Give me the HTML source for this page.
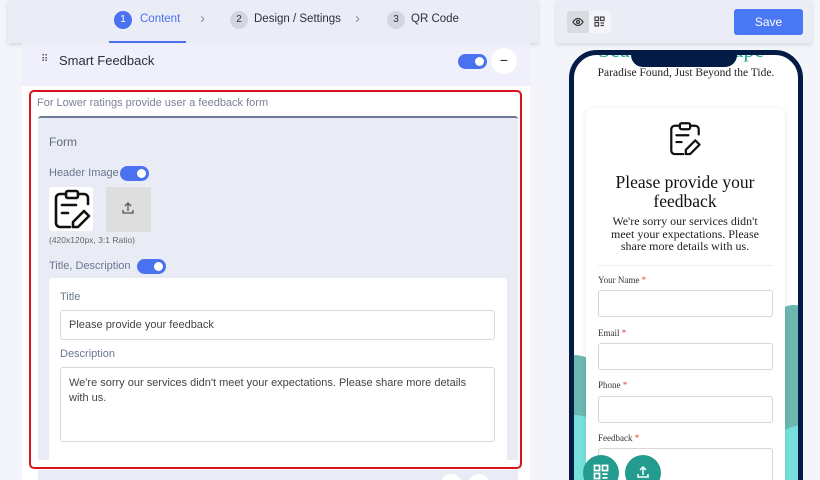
<!DOCTYPE html>
<html style="width:820px;height:480px;overflow:hidden"><head><meta charset="utf-8"><style>
*{box-sizing:border-box;margin:0;padding:0}
body{width:820px;height:480px;overflow:hidden;background:#f3f5fa;font-family:"Liberation Sans",sans-serif;position:relative}
.abs{position:absolute}
.tog{position:absolute;width:29px;height:15px;border-radius:8px;background:#4a72f0}
.tog:after{content:"";position:absolute;right:3px;top:3px;width:9px;height:9px;border-radius:50%;background:#fff}
.lbl{color:#6b7690;font-size:11px}
.inp{position:absolute;background:#fff;border:1px solid #d5d8df;border-radius:3px}
.pl{position:absolute;left:598px;font-family:"Liberation Serif",serif;font-size:9px;color:#333}
.pl b{color:#e53935;font-weight:normal}
.pi{position:absolute;left:598px;width:175px;height:27px;border:1px solid #d6d6d6;border-radius:3px;background:#fff}
</style></head><body>
<div class="abs" style="left:0;top:0;width:820px;height:480px;overflow:hidden">
<!-- left -->
<div class="abs" style="left:22px;top:40px;width:508px;height:440px;background:#fff"></div>
<div class="abs" style="left:8px;top:0;width:530px;height:43px;background:#eaedf6;box-shadow:0 2px 4px rgba(0,0,0,.12)"></div>
<div class="abs" style="left:114px;top:11px;width:18px;height:18px;border-radius:50%;background:#4a72f0;color:#fff;font-size:10px;text-align:center;line-height:18px">1</div>
<div class="abs" style="left:140px;top:13px;font-size:11.5px;color:#4a72f0">Content</div>
<div class="abs" style="left:109px;top:41px;width:77px;height:2px;background:#4a72f0"></div>
<div class="abs" style="left:200px;top:10px;font-size:15px;color:#8a90a0">›</div>
<div class="abs" style="left:230px;top:11px;width:18px;height:18px;border-radius:50%;background:#d2d6e0;color:#333;font-size:10px;text-align:center;line-height:18px">2</div>
<div class="abs" style="left:254px;top:13px;font-size:11.5px;color:#2b3040">Design / Settings</div>
<div class="abs" style="left:355px;top:10px;font-size:15px;color:#8a90a0">›</div>
<div class="abs" style="left:387px;top:11px;width:18px;height:18px;border-radius:50%;background:#d2d6e0;color:#333;font-size:10px;text-align:center;line-height:18px">3</div>
<div class="abs" style="left:411px;top:13px;font-size:11.5px;color:#2b3040">QR Code</div>

<div class="abs" style="left:22px;top:43px;width:508px;height:43px;background:#eff0fb"></div>
<div class="abs" style="left:41px;top:54px;font-size:10px;color:#555">⠿</div>
<div class="abs" style="left:59px;top:53px;font-size:13px;color:#2b3040">Smart Feedback</div>
<div class="tog" style="left:458px;top:54px"></div>
<div class="abs" style="left:491px;top:48px;width:26px;height:26px;border-radius:50%;background:#fff;text-align:center;line-height:24px;font-size:14px;color:#222">−</div>

<div class="abs" style="left:38px;top:470px;width:480px;height:10px;background:#e9ecf5"></div>
<div class="abs" style="left:440px;top:474px;width:22px;height:22px;border-radius:50%;background:#fff"></div>
<div class="abs" style="left:468px;top:474px;width:22px;height:22px;border-radius:50%;background:#fff"></div>

<div class="abs" style="left:29px;top:90px;width:493px;height:379px;border:2px solid #d9141d;border-radius:5px;background:#fff"></div>
<div class="abs lbl" style="left:37px;top:97px;font-size:11px;color:#7a8298">For Lower ratings provide user a feedback form</div>
<div class="abs" style="left:38px;top:116px;width:480px;height:344px;background:#e9ecf5;border-top:2px solid #6f7a94;border-radius:3px 3px 0 0"></div>
<div class="abs" style="left:49px;top:135px;font-size:12px;color:#606a80">Form</div>
<div class="abs lbl" style="left:49px;top:167px">Header Image</div>
<div class="tog" style="left:120px;top:166px"></div>
<div class="abs" style="left:49px;top:187px;width:44px;height:44px;background:#fff;border-radius:3px"></div>
<svg class="abs" style="left:51px;top:189px" width="42" height="42" viewBox="0 0 42 42" fill="none" stroke="#111" stroke-width="2.6" stroke-linecap="round" stroke-linejoin="round"><rect x="15" y="2" width="12" height="7" rx="2"/><path d="M15 5H9a4 4 0 0 0-4 4v25a4 4 0 0 0 4 4h10M27 5h6a4 4 0 0 1 4 4v6"/><path d="M11 16h14M11 24h6"/><path d="M33 22l5 5-11 11h-5v-5z"/></svg>
<div class="abs" style="left:106px;top:187px;width:45px;height:45px;background:#dedede;border-radius:2px"></div>
<svg class="abs" style="left:121px;top:201px" width="14" height="14" viewBox="0 0 14 14" fill="none" stroke="#555" stroke-width="1.3"><path d="M7 10V2M4 5l3-3 3 3M2 9v3h10V9"/></svg>
<div class="abs" style="left:49px;top:235px;font-size:8.5px;color:#666">(420x120px, 3:1 Ratio)</div>
<div class="abs lbl" style="left:49px;top:260px">Title, Description</div>
<div class="tog" style="left:137px;top:259px"></div>
<div class="abs" style="left:49px;top:278px;width:458px;height:183px;background:#fff;border-radius:3px"></div>
<div class="abs lbl" style="left:60px;top:291px">Title</div>
<div class="inp" style="left:60px;top:310px;width:435px;height:30px"></div>
<div class="abs" style="left:69px;top:319px;font-size:11px;color:#444">Please provide your feedback</div>
<div class="abs lbl" style="left:60px;top:348px">Description</div>
<div class="inp" style="left:60px;top:367px;width:435px;height:75px"></div>
<div class="abs" style="left:69px;top:376px;font-size:11px;color:#444;line-height:15px;width:410px">We're sorry our services didn't meet your expectations. Please share more details with us.</div>

<!-- right -->
<div class="abs" style="left:556px;top:0;width:256px;height:43px;background:#eaedf6;box-shadow:0 2px 4px rgba(0,0,0,.12)"></div>
<div class="abs" style="left:567px;top:11px;width:44px;height:22px;border-radius:3px;background:#f3f5fa"></div>
<div class="abs" style="left:567px;top:11px;width:22px;height:22px;border-radius:3px 0 0 3px;background:#d8dbe2"></div>
<svg class="abs" style="left:572px;top:16px" width="12" height="12" viewBox="0 0 12 12" fill="none" stroke="#333" stroke-width="1.2"><path d="M1 6s2-3.5 5-3.5S11 6 11 6 9 9.5 6 9.5 1 6 1 6z"/><circle cx="6" cy="6" r="1.5"/></svg>
<svg class="abs" style="left:594px;top:16px" width="11" height="11" viewBox="0 0 11 11" fill="none" stroke="#444" stroke-width="1.2"><rect x="1" y="1" width="3.5" height="3.5"/><rect x="6.5" y="1" width="3.5" height="3.5"/><rect x="1" y="6.5" width="3.5" height="3.5"/><path d="M6.5 7h3.5M6.5 9.5h3.5"/></svg>
<div class="abs" style="left:734px;top:9px;width:69px;height:26px;border-radius:3px;background:#4a78f5;color:#fff;font-size:12px;text-align:center;line-height:26px">Save</div>

<div class="abs" style="left:569px;top:50px;width:234px;height:460px;border:5px solid #021c45;border-radius:28px;background:#fff;overflow:hidden">
  <div class="abs" style="left:-60px;top:300px;width:120px;height:240px;background:#6ab8b0;border-radius:50%"></div>
  <div class="abs" style="left:-60px;top:360px;width:120px;height:200px;background:#78e0dc;border-radius:50%"></div>
  <div class="abs" style="left:160px;top:250px;width:120px;height:300px;background:#6ab8b0;border-radius:50%"></div>
  <div class="abs" style="left:170px;top:370px;width:120px;height:200px;background:#78e0dc;border-radius:50%"></div>
  <div class="abs" style="left:24px;top:-18px;font-size:22px;color:#1ea397;font-family:'Liberation Serif',serif">Sea Breeze Escape</div>
  <div class="abs" style="left:0;top:12px;width:224px;text-align:center;font-size:11.5px;color:#222;font-family:'Liberation Serif',serif">Paradise Found, Just Beyond the Tide.</div>
  <div class="abs" style="left:12px;top:53px;width:199px;height:420px;background:#fff;border-radius:8px;box-shadow:0 1px 6px rgba(0,0,0,.1)"></div>
  <div class="abs" style="left:57px;top:0;width:106px;height:12px;background:#021c45;border-radius:0 0 12px 12px"></div>
</div>
<svg class="abs" style="left:667px;top:121px" width="36" height="37" viewBox="0 0 42 42" fill="none" stroke="#111" stroke-width="2.6" stroke-linecap="round" stroke-linejoin="round"><rect x="15" y="2" width="12" height="7" rx="2"/><path d="M15 5H9a4 4 0 0 0-4 4v25a4 4 0 0 0 4 4h10M27 5h6a4 4 0 0 1 4 4v6"/><path d="M11 16h14M11 24h6"/><path d="M33 22l5 5-11 11h-5v-5z"/></svg>
<div class="abs" style="left:590px;top:173px;width:190px;text-align:center;font-family:'Liberation Serif',serif;font-size:17.5px;line-height:19px;color:#111">Please provide your feedback</div>
<div class="abs" style="left:600px;top:215px;width:170px;text-align:center;font-family:'Liberation Serif',serif;font-size:12px;line-height:12.5px;color:#222">We're sorry our services didn't meet your expectations. Please share more details with us.</div>
<div class="abs" style="left:598px;top:265px;width:175px;border-top:1px dotted #ddd"></div>
<div class="pl" style="top:275px">Your Name <b>*</b></div><div class="pi" style="top:290px"></div>
<div class="pl" style="top:328px">Email <b>*</b></div><div class="pi" style="top:343px"></div>
<div class="pl" style="top:380px">Phone <b>*</b></div><div class="pi" style="top:396px"></div>
<div class="pl" style="top:433px">Feedback <b>*</b></div><div class="pi" style="top:448px;height:40px"></div>
<div class="abs" style="left:583px;top:455px;width:36px;height:36px;border-radius:50%;background:#239b8e"></div>
<svg class="abs" style="left:593px;top:464px" width="16" height="16" viewBox="0 0 11 11" fill="none" stroke="#fff" stroke-width="1.2"><rect x="1" y="1" width="3.5" height="3.5"/><rect x="6.5" y="1" width="3.5" height="3.5"/><rect x="1" y="6.5" width="3.5" height="3.5"/><path d="M6.5 7h3.5M6.5 9.5h3.5"/></svg>
<div class="abs" style="left:625px;top:455px;width:36px;height:36px;border-radius:50%;background:#239b8e"></div>
<svg class="abs" style="left:636px;top:465px" width="14" height="14" viewBox="0 0 14 14" fill="none" stroke="#fff" stroke-width="1.5"><path d="M7 10V2M4 5l3-3 3 3M2 9v3h10V9"/></svg>
</div>
</body></html>
